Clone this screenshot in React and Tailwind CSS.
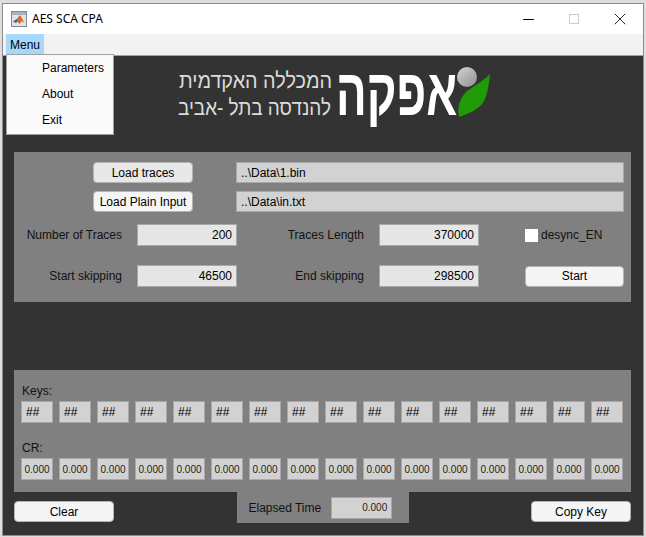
import { Minus, X } from 'lucide-react'

const FONT = "font-['Liberation_Sans',Arial,sans-serif]"
const KEYS = Array.from({ length: 16 }, (_, i) => i)

function MatlabIcon() {
  return (
    <svg width="16" height="16" viewBox="0 0 16 16" className="shrink-0">
      <rect x="0.5" y="0.5" width="15" height="15" fill="#dfe4ea" stroke="#7f8893" />
      <rect x="1" y="1" width="14" height="3" fill="#a9b4c2" />
      <path d="M2 10.5 L6 8 L8 5 L9.5 4.5 L13.5 12 L11 10 L8.5 13 L6.5 10.5 Z" fill="#d9682a" />
      <path d="M2 10.5 L6 8 L7 10 L6.5 10.5 L5 12 Z" fill="#2f6fb0" />
    </svg>
  )
}

function Logo() {
  return (
    <svg width="330" height="79" viewBox="0 -4 330 79" className="ml-[167px]">
      <defs>
        <linearGradient id="ball" x1="0" y1="0" x2="1" y2="1">
          <stop offset="0" stopColor="#d4d4d6" />
          <stop offset="1" stopColor="#8f8f92" />
        </linearGradient>
      </defs>
      <g fontFamily="'Liberation Sans', sans-serif">
        <text transform="translate(9 28) scale(0.9 1)" fontSize="22" fill="#dcdcdc">המכללה האקדמית</text>
        <text transform="translate(8 55) scale(0.86 1)" fontSize="22" fill="#dcdcdc">להנדסה בתל -אביב</text>
        <text transform="translate(166 55) scale(0.69 1)" fontSize="66" fontWeight="700" fill="#ffffff">אפקה</text>
      </g>
      <circle cx="297" cy="17" r="10" fill="url(#ball)" />
      <path d="M320 14 C311 24 296 28 291 39 C288 45 288 51 289 57 C298 54 310 49 314 41 C318 33 319 23 320 14 Z" fill="#1f9c05" />
    </svg>
  )
}

function Button({ children, className = '', bg = 'bg-[#f5f5f5]', width = 'w-[100px]' }) {
  return (
    <div className={`h-[21px] ${width} shrink-0 rounded-[4px] border border-[#b4b4b4] ${bg} flex items-center justify-center text-[12px] text-black ${className}`}>
      {children}
    </div>
  )
}

function Field({ children, className = '' }) {
  return (
    <div className={`h-[22px] w-[100px] shrink-0 border border-[#a8a8a8] bg-[#e6e6e6] pr-[4px] flex items-center justify-end text-[12px] text-black ${className}`}>
      {children}
    </div>
  )
}

function PathField({ children }) {
  return (
    <div className="h-[21px] w-[388px] shrink-0 border border-[#a8a8a8] bg-[#d2d2d2] pl-[4px] flex items-center text-[12px] text-black">
      {children}
    </div>
  )
}

function Label({ children, className = '' }) {
  return <div className={`text-right text-[12px] text-[#111] ${className}`}>{children}</div>
}

export default function App() {
  return (
    <div className={`h-[537px] w-[646px] overflow-hidden bg-[#dedede] px-[2px] pt-[3px] pb-[1px] ${FONT}`}>
      <div className="relative flex h-full flex-col border border-[#8c8c8c]">
        <div className="flex h-[30px] items-center bg-white pl-[8px]">
          <MatlabIcon />
          <span className="ml-[5px] font-['Noto_Sans',sans-serif] text-[12px] text-black">AES SCA CPA</span>
          <div className="ml-auto flex items-center">
            <Minus size={17} strokeWidth={1.6} className="mr-[32px] text-black" />
            <div className="mr-[31px] h-[10px] w-[10px] border border-[#cccccc]" />
            <X size={20} strokeWidth={1} className="mr-[13px] text-black" />
          </div>
        </div>

        <div className="flex h-[22px] items-stretch border-b border-[#a0a0a0] bg-[#f2f2f2] pl-[3px]">
          <div className="flex w-[38px] items-center justify-center bg-[#a6d8fd] text-[12px] text-black">Menu</div>
        </div>

        <div className="absolute left-[3px] top-[50px] z-10 flex h-[81px] w-[108px] flex-col border border-[#a0a0a0] bg-[#fafafa] pl-[35px] text-[12px] text-black">
          <div className="flex h-[25px] items-center">Parameters</div>
          <div className="mt-[1px] flex h-[26px] items-center">About</div>
          <div className="flex h-[26px] items-center">Exit</div>
        </div>

        <div className="flex flex-1 flex-col bg-[#333333]">
          <div className="h-[96px]">
            <Logo />
          </div>

          <div className="mx-[11px] h-[150px] w-[617px] bg-[#808080] pt-[10px]">
            <div className="flex items-center pl-[79px]">
              <Button bg="bg-[#e8e8e8]">Load traces</Button>
              <div className="ml-[43px]"><PathField>..\Data\1.bin</PathField></div>
            </div>
            <div className="mt-[8px] flex items-center pl-[79px]">
              <Button>Load Plain Input</Button>
              <div className="ml-[43px]"><PathField>..\Data\in.txt</PathField></div>
            </div>
            <div className="mt-[12px] flex items-center">
              <Label className="w-[108px]">Number of Traces</Label>
              <Field className="ml-[15px]">200</Field>
              <Label className="w-[127px]">Traces Length</Label>
              <Field className="ml-[15px]">370000</Field>
              <div className="ml-[46px] h-[13px] w-[13px] bg-white" />
              <span className="ml-[3px] text-[12px] text-[#111]">desync_EN</span>
            </div>
            <div className="mt-[19px] flex items-center">
              <Label className="w-[108px]">Start skipping</Label>
              <Field className="ml-[15px]">46500</Field>
              <Label className="w-[127px]">End skipping</Label>
              <Field className="ml-[15px]">298500</Field>
              <Button className="ml-[46px]" width="w-[99px]">Start</Button>
            </div>
          </div>

          <div className="mx-[11px] mt-[68px] h-[122px] w-[617px] bg-[#808080] px-[7px]">
            <div className="pl-[1px] pt-[14px] text-[12px] leading-[14px] text-[#111]">Keys:</div>
            <div className="mt-[3px] flex gap-[6px]">
              {KEYS.map(i => (
                <div key={i} className="flex h-[22px] w-[32px] items-center border border-[#a8a8a8] bg-[#d2d2d2] pl-[4px] text-[12px] text-black">##</div>
              ))}
            </div>
            <div className="mt-[18px] pl-[1px] text-[12px] leading-[14px] text-[#111]">CR:</div>
            <div className="mt-[3px] flex gap-[6px]">
              {KEYS.map(i => (
                <div key={i} className="flex h-[22px] w-[32px] items-center justify-center border border-[#a8a8a8] bg-[#d2d2d2] text-[10px] text-[#222]">0.000</div>
              ))}
            </div>
          </div>

          <div className="mx-[11px] flex w-[617px] items-start justify-between">
            <Button className="mt-[9px]">Clear</Button>
            <div className="flex h-[31px] w-[172px] items-center bg-[#808080] pl-[12px]">
              <span className="text-[12px] text-[#111]">Elapsed Time</span>
              <div className="ml-[10px] flex h-[22px] w-[61px] items-center justify-end border border-[#a8a8a8] bg-[#d2d2d2] pr-[4px] text-[10px] text-[#222]">0.000</div>
            </div>
            <Button className="mt-[9px]">Copy Key</Button>
          </div>
        </div>
      </div>
    </div>
  )
}
